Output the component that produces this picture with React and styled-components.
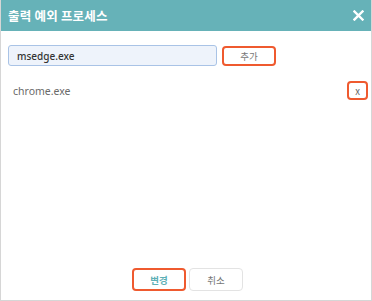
import React, { useState } from "react"
import styled, { createGlobalStyle } from "styled-components"

const GlobalStyle = createGlobalStyle`
  html, body {
    margin: 0;
    padding: 0;
    background: #fff;
  }
  body {
    font-family: "Noto Sans", "Noto Sans CJK KR", sans-serif;
  }
`

const Dialog = styled.div`
  width: 372px;
  height: 301px;
  box-sizing: border-box;
  border: 1px solid #d6d6d6;
  border-top: none;
  display: flex;
  flex-direction: column;
  background: #fff;
`

const Header = styled.div`
  height: 31px;
  flex-shrink: 0;
  background: #66b2b8;
  display: flex;
  align-items: center;
  justify-content: space-between;
  padding: 0 5px 0 7px;
`

const Title = styled.h1`
  margin: 0;
  color: #fff;
  font-family: "Noto Sans CJK KR", sans-serif;
  font-size: 12.5px;
  font-weight: 700;
  letter-spacing: 0.2px;
`

const CloseButton = styled.button`
  border: none;
  background: none;
  padding: 0;
  width: 16px;
  height: 16px;
  display: flex;
  align-items: center;
  justify-content: center;
  cursor: pointer;
`

const Body = styled.div`
  flex: 1;
  display: flex;
  flex-direction: column;
  padding: 14px 3px 0 7px;
`

const InputRow = styled.div`
  display: flex;
  align-items: center;
  gap: 5px;
`

const TextInput = styled.input`
  width: 209px;
  height: 21px;
  box-sizing: border-box;
  border: 1px solid #a9c3e6;
  border-radius: 3px;
  background: #eef3fb;
  padding: 0 8px;
  font-family: "Noto Sans", sans-serif;
  font-size: 10px;
  font-weight: 500;
  color: #333;
  outline: none;
`

const OutlineButton = styled.button`
  width: ${p => p.$w || 54}px;
  height: ${p => p.$h || 20}px;
  box-sizing: border-box;
  border: ${p => (p.$hot ? "2px solid #ef5a2f" : "1px solid #e3e3e3")};
  border-radius: 4px;
  background: #fff;
  color: ${p => p.$color || "#777"};
  font-family: "Noto Sans CJK KR", sans-serif;
  font-size: 9.5px;
  font-weight: ${p => (p.$bold ? 700 : 400)};
  padding: 0;
  display: flex;
  align-items: center;
  justify-content: center;
  cursor: pointer;
`

const List = styled.ul`
  list-style: none;
  margin: 15px 0 0;
  padding: 0;
`

const Item = styled.li`
  display: flex;
  align-items: center;
  justify-content: space-between;
  height: 19px;
  padding-left: 5px;
  font-size: 10.5px;
  color: #6a6a6a;
`

const Footer = styled.div`
  margin-top: auto;
  display: flex;
  justify-content: center;
  gap: 3px;
  padding: 0 1px 9px 0;
`

export default function App() {
  const [value, setValue] = useState("msedge.exe")
  return (
    <>
      <GlobalStyle />
      <Dialog>
        <Header>
          <Title>출력 예외 프로세스</Title>
          <CloseButton aria-label="닫기">
            <svg width="11" height="11" viewBox="0 0 11 11">
              <path
                d="M1.5 1.5 L9.5 9.5 M9.5 1.5 L1.5 9.5"
                stroke="#fff"
                strokeWidth="2.4"
                strokeLinecap="square"
              />
            </svg>
          </CloseButton>
        </Header>
        <Body>
          <InputRow>
            <TextInput value={value} onChange={e => setValue(e.target.value)} />
            <OutlineButton $hot>추가</OutlineButton>
          </InputRow>
          <List>
            <Item>
              chrome.exe
              <OutlineButton $hot $w={21} $h={19} $color="#666">
                x
              </OutlineButton>
            </Item>
          </List>
          <Footer>
            <OutlineButton $hot $w={54} $h={23} $color="#5eb0b6" $bold>
              변경
            </OutlineButton>
            <OutlineButton $w={54} $h={23} $color="#777">
              취소
            </OutlineButton>
          </Footer>
        </Body>
      </Dialog>
    </>
  )
}
